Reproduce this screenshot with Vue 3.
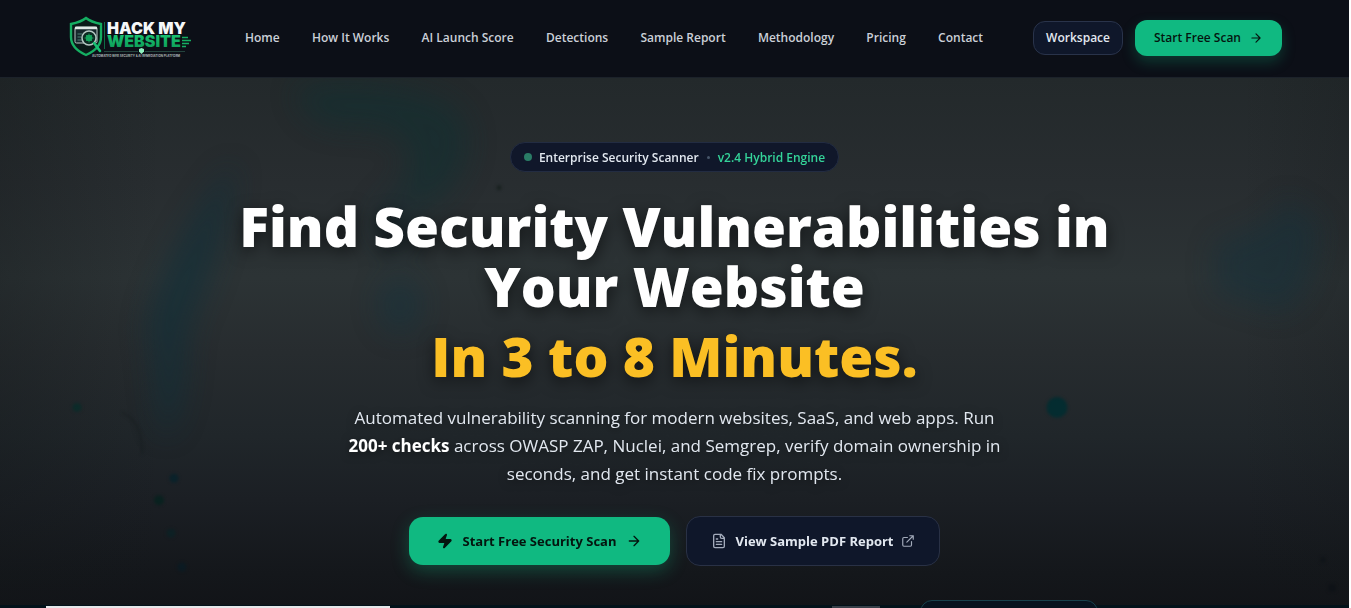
<script setup>
const navItems = ['Home', 'How It Works', 'AI Launch Score', 'Detections', 'Sample Report', 'Methodology', 'Pricing', 'Contact']
</script>

<template>
  <div class="page">
    <header class="header">
      <a class="logo" href="#" aria-label="Hack My Website">
        <svg width="124" height="44" viewBox="0 0 124 44">
          <defs>
            <linearGradient id="logo-green" x1="0" y1="0" x2="0" y2="1">
              <stop offset="0" stop-color="#1ccb78" />
              <stop offset="1" stop-color="#0b9653" />
            </linearGradient>
          </defs>
          <path d="M17 2C12 6 7 7 2 8v13c0 9 6 14 15 18c9-4 15-9 15-18V8C27 7 22 6 17 2Z" fill="#0a1a18" stroke="#15ae62" stroke-width="2.4" />
          <rect x="6" y="11" width="22" height="16" rx="1.5" fill="#16272b" stroke="#b9c8c6" stroke-width="1" />
          <path d="M6 12h22" stroke="#dfe8e6" stroke-width="2.5" />
          <path d="M8.500 18h5M8.500 21h4M8.500 24h5" stroke="#4f8076" stroke-width="1" />
          <circle cx="20" cy="22" r="7" fill="#0b2b22" stroke="#b4c8c3" stroke-width="1.500" />
          <circle cx="20" cy="22" r="3.300" fill="#14a45d" />
          <path d="M20 17.500v9M15.500 22h9M17 19l6 6M23 19l-6 6" stroke="#14a45d" stroke-width="0.800" />
          <path d="M25 27l6 8" stroke="#18c274" stroke-width="2.600" stroke-linecap="round" />
          <path d="M35.500 6v27" stroke="#0e6b45" stroke-width="1" />
          <text x="38" y="18" class="logo-top">HACK MY</text>
          <text x="38" y="31" class="logo-bottom" fill="url(#logo-green)">WEBSITE</text>
          <path d="M113 21.500h6M113 24.500h9M113 27.500h7M113 30.500h4" stroke="#15ae62" stroke-width="1.300" />
          <path d="M35 35.500h34M76 35.500h40" stroke="#2b5148" stroke-width="0.800" />
          <path d="M72.500 32l2.500 1v2.500l-2.500 2.500l-2.500-2.500V33Z" fill="#8ff0bf" />
          <text x="23" y="41" class="logo-tag">AUTOMATED WEB SECURITY &amp; AI REMEDIATION PLATFORM</text>
        </svg>
      </a>
      <nav class="nav" aria-label="Main">
        <a v-for="item in navItems" :key="item" href="#">{{ item }}</a>
      </nav>
      <div class="header-actions">
        <button class="workspace" type="button">Workspace</button>
        <button class="scan" type="button">
          Start Free Scan
          <svg class="icon-small" viewBox="0 0 24 24"><path d="M5 12h14M12 5l7 7l-7 7" /></svg>
        </button>
      </div>
    </header>

    <main class="hero">
      <svg class="backdrop" viewBox="0 0 1349 528" preserveAspectRatio="none" aria-hidden="true">
        <defs>
          <filter id="soft" x="-50%" y="-50%" width="200%" height="200%" color-interpolation-filters="sRGB"><feGaussianBlur stdDeviation="14" /></filter>
          <filter id="fine" x="-50%" y="-50%" width="200%" height="200%" color-interpolation-filters="sRGB"><feGaussianBlur stdDeviation="1.500" /></filter>
        </defs>
        <g filter="url(#soft)" opacity=".75">
          <path d="M295 10C340 0 420 5 455 30C480 55 470 100 430 130L395 115C420 80 410 55 370 50C340 50 305 55 295 10Z" fill="#0f3032" opacity=".7" />
          <path d="M235 85C200 120 155 200 147 250C155 290 155 340 165 360C185 340 185 290 188 255C205 210 225 170 235 85Z" fill="#122f38" opacity=".85" />
          <ellipse cx="395" cy="145" rx="22" ry="30" fill="#142f37" opacity=".5" />
          <ellipse cx="400" cy="228" rx="22" ry="28" fill="#16333d" opacity=".7" />
          <path d="M1285 120L1320 145C1315 200 1300 230 1280 235L1215 215L1215 165C1260 150 1275 145 1285 120Z" fill="#16313a" opacity=".7" />
        </g>
        <g filter="url(#fine)">
          <circle cx="77" cy="330" r="4.500" fill="#0c2b29" />
          <circle cx="174" cy="401" r="4.500" fill="#0a222a" />
          <circle cx="159" cy="423" r="5" fill="#09211f" />
          <circle cx="171" cy="456" r="4.500" fill="#0d2024" />
          <circle cx="182" cy="490" r="4.500" fill="#0b1a22" />
          <circle cx="1057" cy="330" r="10.500" fill="#042c30" />
          <circle cx="499" cy="110" r="2.500" fill="#18201f" />
          <circle cx="1323" cy="483" r="3" fill="#101419" />
          <circle cx="1332" cy="511" r="4" fill="#0e1217" />
          <path d="M122 335C139 344 142 355 142 377" fill="none" stroke="#161c1e" stroke-width="1.500" opacity=".7" />
        </g>
      </svg>

      <div class="content">
        <p class="badge">
          <span class="badge-dot"></span>
          <span>Enterprise Security Scanner</span>
          <span class="badge-separator"></span>
          <span class="badge-version">v2.4 Hybrid Engine</span>
        </p>
        <h1>
          Find Security Vulnerabilities in Your&nbsp;Website
          <span class="accent">In 3 to 8 Minutes.</span>
        </h1>
        <p class="lead">
          Automated vulnerability scanning for modern websites, SaaS, and web apps. Run
          <strong>200+ checks</strong> across OWASP ZAP, Nuclei, and Semgrep, verify domain ownership in
          seconds, and get instant code fix prompts.
        </p>
        <div class="actions">
          <button class="primary" type="button">
            <svg class="bolt" viewBox="0 0 24 24"><path d="M4 14a1 1 0 0 1-.78-1.630l9.900-10.200a.5.5 0 0 1 .86.460l-1.920 6.020A1 1 0 0 0 13 10h7a1 1 0 0 1 .78 1.630l-9.900 10.200a.5.5 0 0 1-.86-.460l1.920-6.020A1 1 0 0 0 11 14Z" /></svg>
            Start Free Security Scan
            <svg class="icon" viewBox="0 0 24 24"><path d="M5 12h14M12 5l7 7l-7 7" /></svg>
          </button>
          <button class="secondary" type="button">
            <svg class="icon muted" viewBox="0 0 24 24"><path d="M15 2H6a2 2 0 0 0-2 2v16a2 2 0 0 0 2 2h12a2 2 0 0 0 2-2V7ZM14 2v4a2 2 0 0 0 2 2h4M10 9H8M16 13H8M16 17H8" /></svg>
            View Sample PDF Report
            <svg class="icon-small muted" viewBox="0 0 24 24"><path d="M15 3h6v6M10 14L21 3M18 13v6a2 2 0 0 1-2 2H5a2 2 0 0 1-2-2V8a2 2 0 0 1 2-2h6" /></svg>
          </button>
        </div>
      </div>
    </main>

    <section class="next" aria-hidden="true">
      <span class="next-light"></span>
      <span class="next-tab"></span>
      <span class="next-card"></span>
    </section>
  </div>
</template>

<style>
body {
  margin: 0;
  background: #fff;
}
</style>

<style scoped>
.page {
  box-sizing: border-box;
  display: flex;
  flex-direction: column;
  min-height: 100vh;
  margin-right: 2px;
  overflow: hidden;
  background: #121418;
  color: #e2e8f0;
  font-family: "Open Sans", "Noto Sans", sans-serif;
}
button {
  display: flex;
  align-items: center;
  box-sizing: border-box;
  border: 0;
  font-family: inherit;
  white-space: nowrap;
  cursor: pointer;
}
.header {
  display: flex;
  align-items: center;
  box-sizing: border-box;
  height: 78px;
  padding: 0 67px 2px 69px;
  border-bottom: 1px solid #1c222a;
  background: #0c0f17;
}
.logo {
  display: flex;
  flex: none;
  margin-right: 52px;
}
.logo-top,
.logo-bottom {
  font: 900 16px Inter, sans-serif;
}
.logo-top {
  fill: #f5f7f8;
}
.logo-tag {
  fill: #aab4b4;
  font: 700 3px Inter, sans-serif;
}
.nav {
  display: flex;
  flex: 1;
  justify-content: space-between;
  margin-right: 50px;
}
.nav a {
  color: #cbd0d8;
  font-size: 12px;
  font-weight: 600;
  line-height: 18px;
  text-decoration: none;
  white-space: nowrap;
}
.header-actions {
  display: flex;
  align-items: center;
  gap: 12px;
}
.workspace {
  height: 34px;
  padding: 0 12px;
  border: 1px solid #29334a;
  border-radius: 12px;
  background: #0f172a;
  color: #e2e8f0;
  font-size: 12px;
  font-weight: 600;
}
.scan {
  gap: 8px;
  height: 36px;
  padding: 0 19px;
  border-radius: 12px;
  background: #10b981;
  box-shadow: 0 6px 14px rgba(16, 185, 129, 0.25);
  color: #04150f;
  font-size: 12px;
  font-weight: 600;
}
.icon,
.icon-small {
  width: 16px;
  height: 16px;
  fill: none;
  stroke: currentColor;
  stroke-width: 2;
  stroke-linecap: round;
  stroke-linejoin: round;
}
.icon-small {
  width: 14px;
  height: 14px;
}
.muted {
  color: #a3abbb;
}
.hero {
  position: relative;
  flex: 1;
  background:
    linear-gradient(90deg, rgba(18, 22, 24, 0.3), transparent 12%, transparent 92%, rgba(18, 22, 24, 0.2)),
    linear-gradient(#23292b 0%, #282d30 20%, #2c3335 38%, #272c2f 52%, #20262a 68%, #1b1f24 80%, #14171b 94%, #121418 100%);
}
.backdrop {
  position: absolute;
  inset: 0;
  width: 100%;
  height: 100%;
}
.content {
  position: relative;
  display: flex;
  flex-direction: column;
  align-items: center;
  padding: 64px 24px 38px;
}
.badge {
  display: flex;
  align-items: center;
  gap: 7px;
  box-sizing: border-box;
  height: 30px;
  margin: 0;
  padding: 0 13px;
  border: 1px solid #222c42;
  border-radius: 15px;
  background: #10172a;
  color: #e2e8f0;
  font-size: 12px;
  font-weight: 600;
  white-space: nowrap;
}
.badge-dot {
  width: 8px;
  height: 8px;
  border-radius: 50%;
  background: #2a7c66;
}
.badge-separator {
  width: 3px;
  height: 3px;
  margin: 0 1px;
  border-radius: 50%;
  background: #475569;
}
.badge-version {
  color: #34d399;
}
h1 {
  max-width: 896px;
  margin: 24px 0 0;
  color: #fff;
  font-size: 55px;
  font-weight: 800;
  line-height: 60px;
  text-align: center;
  text-shadow: 0 4px 16px rgba(0, 0, 0, 0.6);
}
.accent {
  display: block;
  margin-top: 10px;
  color: #fbbf24;
}
.lead {
  max-width: 672px;
  margin: 18px 0 0;
  color: #e2e8f0;
  font-size: 17px;
  line-height: 28px;
  text-align: center;
  text-shadow: 0 2px 8px rgba(0, 0, 0, 0.5);
}
.lead strong {
  color: #fff;
  font-weight: 700;
}
.actions {
  display: flex;
  align-items: center;
  gap: 16px;
  margin-top: 28px;
}
.primary,
.secondary {
  font-size: 13px;
  border-radius: 14px;
}
.primary {
  gap: 10px;
  height: 48px;
  padding: 0 28px;
  background: #10b981;
  box-shadow: 0 6px 18px rgba(16, 185, 129, 0.3);
  color: #04150f;
  font-weight: 700;
}
.secondary {
  gap: 8px;
  height: 50px;
  padding: 0 24px;
  border: 1px solid #293145;
  background: #0f172a;
  color: #e2e8f0;
  font-weight: 700;
}
.bolt {
  width: 16px;
  height: 16px;
  fill: currentColor;
  stroke: currentColor;
  stroke-width: 2;
}
.next {
  position: relative;
  height: 3px;
  background: #03121a;
}
.next-light,
.next-tab,
.next-card {
  position: absolute;
  box-sizing: border-box;
}
.next-light {
  bottom: 0;
  left: 46px;
  width: 344px;
  height: 2px;
  background: #e5e7e9;
}
.next-tab {
  bottom: 0;
  left: 832px;
  width: 48px;
  height: 2px;
  background: #394049;
}
.next-card {
  top: -5px;
  left: 920px;
  width: 178px;
  height: 24px;
  border: 1px solid #17414c;
  border-radius: 12px;
  background: #07131f;
}
</style>
